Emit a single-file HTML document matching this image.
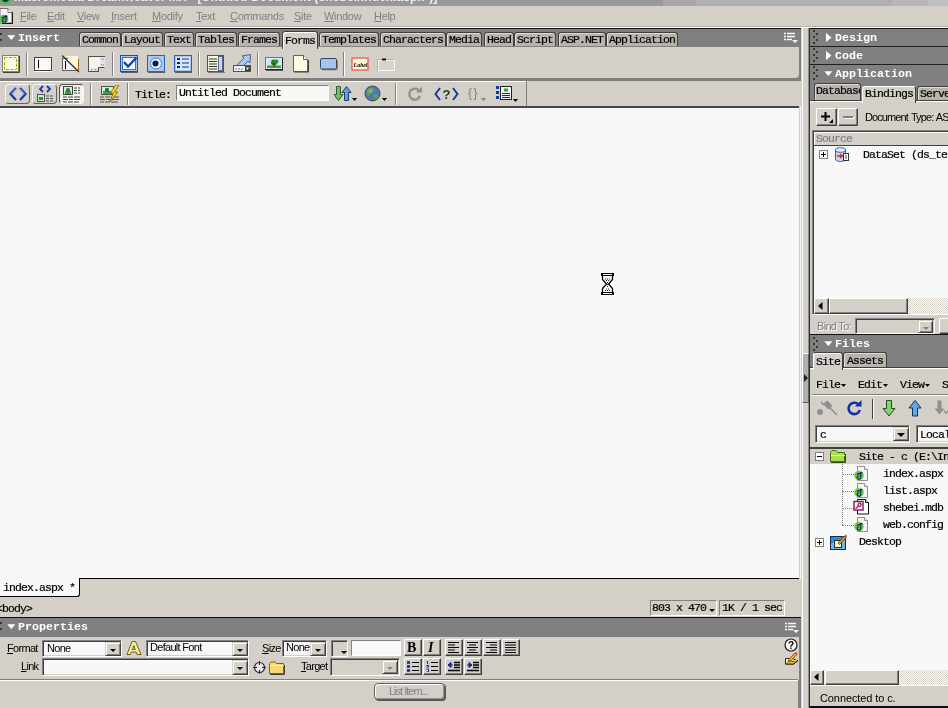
<!DOCTYPE html>
<html lang="en">
<head>
<meta charset="utf-8">
<title>Dreamweaver MX - Untitled Document</title>
<style>
html,body{margin:0;padding:0;}
html{background:#d4d0c8;}
body{width:948px;height:708px;position:relative;overflow:hidden;background:transparent;will-change:transform;font-family:"Liberation Sans",sans-serif;font-size:11px;color:#000;}
.a{position:absolute;}
.s{font-family:"Liberation Mono",monospace;font-size:11.5px;letter-spacing:-0.9px;line-height:12px;white-space:pre;-webkit-text-stroke:0.2px;}
.b{font-family:"Liberation Mono",monospace;font-weight:bold;font-size:11.7px;letter-spacing:-0.02px;line-height:12px;color:#fff;white-space:pre;}
.t{font-family:"Liberation Sans",sans-serif;font-size:11px;line-height:13px;white-space:pre;letter-spacing:-0.7px;}
.hdr{background:#808080;}
.tab{position:absolute;height:12px;top:32px;background:#b8b4ac;border:1px solid #404040;border-bottom:none;border-radius:3px 3px 0 0;padding:1px 2px 0 2px;box-shadow:inset 1px 1px 0 #e0dcd4;}
.tab.act{background:#d4d0c8;top:31px;height:14px;padding-top:3px;box-shadow:inset 1px 1px 0 #fff;border-color:#404040;}
.sep{position:absolute;width:1px;background:#808080;box-shadow:1px 0 0 #fff;}
.sunk{position:absolute;box-sizing:border-box;border:1px solid;border-color:#808080 #fff #fff #808080;box-shadow:inset 1px 1px 0 #404040, inset -1px -1px 0 #d4d0c8;background:#f8f8f8;}
.rais{position:absolute;box-sizing:border-box;border:1px solid;border-color:#fff #404040 #404040 #fff;box-shadow:inset -1px -1px 0 #808080;background:#d4d0c8;}
.dd{position:absolute;box-sizing:border-box;width:16px;border:1px solid;border-color:#d4d0c8 #404040 #404040 #d4d0c8;box-shadow:inset 1px 1px 0 #fff, inset -1px -1px 0 #808080;background:#d4d0c8;}
.dd:after{content:"";position:absolute;left:4px;top:6px;border:3px solid transparent;border-top:3px solid #000;border-bottom:none;}
.dd.dis:after{border-top-color:#808080;}
.dd.big:after{left:3px;top:5px;border-width:4px;border-top-width:4px;}
.white{background:#f8f8f8;}
.grip{position:absolute;width:5px;background-image:linear-gradient(#383838 33.4%,transparent 33.4%),linear-gradient(transparent 50%,#383838 50%,#383838 83.4%,transparent 83.4%);background-size:2px 6px,2px 6px;background-position:0 0,3px 0;background-repeat:repeat-y;}
u{text-decoration:underline;}
</style>
</head>
<body>

<!-- ===== title bar (clipped) ===== -->
<div class="a" style="left:0;top:0;width:663px;height:6px;background:#989898;overflow:hidden;">
  <div class="a t" style="left:14px;top:-9px;font-weight:bold;font-size:12px;color:#f0f0f0;letter-spacing:0;">Macromedia Dreamweaver MX - <span style="letter-spacing:0.15px;">[Untitled Document (shebei/index.aspx*)]</span></div>
</div>
<div class="a" style="left:0;top:-7px;width:11px;height:11px;background:#102868;border:2px solid #50c030;border-radius:7px;box-sizing:border-box;"></div>
<div class="a" style="left:663px;top:0;width:33px;height:6px;background:#aca4ac;"></div>
<div class="a" style="left:696px;top:0;width:196px;height:6px;background:#b0b0b0;"></div>
<div class="a" style="left:892px;top:0;width:36px;height:6px;background:#bcb4bc;"></div>
<div class="a" style="left:928px;top:0;width:20px;height:6px;background:#c0c0c0;"></div>

<!-- ===== menu bar ===== -->
<svg class="a" style="left:0;top:8px;" width="13" height="16" viewBox="0 0 13 16">
  <path d="M0 0.500h8l4 4v10.500H0z" fill="#f4f4f4" stroke="#707070"/>
  <path d="M8 0.500v4h4" fill="#fff" stroke="#707070"/>
  <path d="M12.500 4v11.500H2" fill="none" stroke="#101010"/>
  <circle cx="4" cy="11" r="4.300" fill="#58c030"/>
  <path d="M6 7v5.500a1.800 1.800 0 1 1 -1.600 -1.800M2 10c2 -1 4 -1.500 5.500 -2" stroke="#102080" stroke-width="1.100" fill="none"/>
</svg>
<div id="menubar" class="a t" style="left:0;top:10px;height:14px;width:420px;color:#808080;white-space:normal;letter-spacing:-0.3px;">
  <span class="a" style="top:0;left:20px;"><u>F</u>ile</span>
  <span class="a" style="top:0;left:47px;"><u>E</u>dit</span>
  <span class="a" style="top:0;left:77px;"><u>V</u>iew</span>
  <span class="a" style="top:0;left:111px;"><u>I</u>nsert</span>
  <span class="a" style="top:0;left:152px;"><u>M</u>odify</span>
  <span class="a" style="top:0;left:196px;"><u>T</u>ext</span>
  <span class="a" style="top:0;left:230px;"><u>C</u>ommands</span>
  <span class="a" style="top:0;left:294px;"><u>S</u>ite</span>
  <span class="a" style="top:0;left:324px;"><u>W</u>indow</span>
  <span class="a" style="top:0;left:374px;"><u>H</u>elp</span>
</div>
<div class="a" style="left:0;top:26px;width:948px;height:1px;background:#b4b0a8;"></div>
<div class="a" style="left:0;top:27px;width:948px;height:1px;background:#fff;"></div>
<div class="a" style="left:0;top:28px;width:801px;height:1px;background:#101010;"></div>
<div class="a" style="left:809px;top:28px;width:139px;height:1px;background:#101010;"></div>

<!-- ===== insert bar ===== -->
<div id="insert" class="a hdr" style="left:0;top:29px;width:801px;height:52px;"></div>
<div class="a" style="left:0;top:47px;width:799px;height:31px;background:#d4d0c8;border-radius:0 0 4px 0;"></div>
<div class="grip" style="left:-3px;top:30px;height:14px;"></div>
<svg class="a" style="left:7px;top:35px;" width="9" height="6" viewBox="0 0 9 6"><path d="M0.300 0.300h8l-4 4.700z" fill="#fff"/></svg>
<div class="a b" style="left:18px;top:32px;">Insert</div>
<svg class="a" style="left:784px;top:32px;" width="14" height="12" viewBox="0 0 14 12">
  <path d="M0 1.500h2M3 1.500h8M0 4.500h2M3 4.500h8M0 7.500h2M3 7.500h5" stroke="#fff" stroke-width="1.400"/>
  <path d="M8 8h6l-3 3z" fill="#fff"/>
</svg>
<div id="inserttabs" class="s">
  <div class="tab" style="left:79px;">Common</div>
  <div class="tab" style="left:121px;">Layout</div>
  <div class="tab" style="left:164px;">Text</div>
  <div class="tab" style="left:195px;">Tables</div>
  <div class="tab" style="left:238px;">Frames</div>
  <div class="tab act" style="left:282px;">Forms</div>
  <div class="tab" style="left:319px;">Templates</div>
  <div class="tab" style="left:380px;">Characters</div>
  <div class="tab" style="left:446px;">Media</div>
  <div class="tab" style="left:484px;">Head</div>
  <div class="tab" style="left:514px;">Script</div>
  <div class="tab" style="left:558px;">ASP.NET</div>
  <div class="tab" style="left:606px;">Application</div>
</div>

<div id="inserticons">
  <!-- separators -->
  <div class="sep" style="left:26px;top:52px;height:24px;"></div>
  <div class="sep" style="left:112px;top:52px;height:24px;"></div>
  <div class="sep" style="left:198px;top:52px;height:24px;"></div>
  <div class="sep" style="left:257px;top:52px;height:24px;"></div>
  <div class="sep" style="left:343px;top:52px;height:24px;"></div>
  <!-- form -->
  <svg class="a" style="left:2px;top:55px;" width="18" height="18" viewBox="0 0 18 18">
    <rect x="0.5" y="0.5" width="16" height="16" fill="#fafae0" stroke="#808080"/>
    <path d="M17.5 1v16.5H1" fill="none" stroke="#404040"/>
    <rect x="2.5" y="2.5" width="12" height="12" fill="none" stroke="#a8a800" stroke-dasharray="3 1.5"/>
  </svg>
  <!-- text field -->
  <svg class="a" style="left:34px;top:57px;" width="18" height="15" viewBox="0 0 18 15">
    <rect x="0.5" y="0.5" width="17" height="13" fill="#f8f8f8" stroke="#404040"/>
    <path d="M1 14.5h17" stroke="#fff"/>
    <path d="M4.500 3v8" stroke="#000"/>
  </svg>
  <!-- hidden field -->
  <svg class="a" style="left:61px;top:55px;" width="19" height="18" viewBox="0 0 19 18">
    <rect x="1.500" y="3.500" width="15" height="12" fill="#f0f0f0" stroke="#606060"/>
    <path d="M5 1h12v14z" fill="#fdfad8"/>
    <path d="M4.500 6v8" stroke="#000"/>
    <path d="M1 0.500L18 17" stroke="#303030" stroke-width="1.300"/>
    <path d="M17.500 4v12" stroke="#a06020"/>
  </svg>
  <!-- textarea -->
  <svg class="a" style="left:88px;top:55px;" width="18" height="18" viewBox="0 0 18 18">
    <rect x="0.500" y="1.500" width="16" height="15" fill="#f4f4f4" stroke="#505050"/>
    <rect x="12" y="2" width="5" height="11" fill="#e4e4e4"/>
    <rect x="2" y="13" width="8" height="3" fill="#dcdcdc"/>
    <rect x="10" y="12" width="7" height="5" fill="#d4d0c8"/>
    <path d="M10.500 17v-4.500h6" fill="none" stroke="#505050"/>
    <path d="M13 5l1.500 -1.500L16 5M13 9l1.500 1.500L16 9M3 15l1-1M7 14l1 1" stroke="#808080" fill="none" stroke-width="0.800"/>
  </svg>
  <!-- checkbox -->
  <svg class="a" style="left:120px;top:55px;" width="18" height="18" viewBox="0 0 18 18">
    <rect x="0.500" y="0.500" width="17" height="16" fill="#a8c8f0" stroke="#2050a0"/>
    <rect x="2.500" y="2.500" width="13" height="12" fill="#f0f6ff" stroke="#4070c0"/>
    <path d="M4 7l4 4.500L16.500 2.500" fill="none" stroke="#1040a0" stroke-width="2.200"/>
    <path d="M1 17.500h17" stroke="#606060"/>
  </svg>
  <!-- radio -->
  <svg class="a" style="left:147px;top:55px;" width="18" height="18" viewBox="0 0 18 18">
    <rect x="0.500" y="0.500" width="17" height="16" fill="#a8c8f0" stroke="#3060b0"/>
    <circle cx="9" cy="8.500" r="5.500" fill="#e8f0ff" stroke="#5080c0"/>
    <circle cx="8.500" cy="8.500" r="3" fill="#081850"/>
    <path d="M1 17.500h17" stroke="#606060"/>
  </svg>
  <!-- list -->
  <svg class="a" style="left:174px;top:55px;" width="18" height="18" viewBox="0 0 18 18">
    <rect x="0.500" y="0.500" width="17" height="16" fill="#a8c8f0" stroke="#3060b0"/>
    <rect x="2" y="2" width="14" height="13" fill="#d8e8ff"/>
    <path d="M3 4h3M3 8h3M3 12h3" stroke="#102080" stroke-width="2"/>
    <path d="M8 4h7M8 8h7M8 12h7" stroke="#203070" stroke-width="1"/>
    <path d="M1 17.500h17" stroke="#606060"/>
  </svg>
  <!-- list/menu -->
  <svg class="a" style="left:207px;top:55px;" width="18" height="18" viewBox="0 0 18 18">
    <rect x="0.500" y="0.500" width="16" height="16" fill="#fbfbe4" stroke="#505050"/>
    <rect x="11.500" y="1.500" width="4" height="14" fill="#c8d8f0" stroke="#606080"/>
    <path d="M2 4h8M2 6.500h8M2 9h8M2 11.500h8M2 14h8" stroke="#303030"/>
    <path d="M1 17.500h17" stroke="#808080"/>
  </svg>
  <!-- jump menu -->
  <svg class="a" style="left:233px;top:54px;" width="19" height="19" viewBox="0 0 19 19">
    <path d="M4.500 10.500L11 4 9 2l8.500 -1.500L17 9l-2 -2 -6.500 6.500z" fill="#a8c8f0" stroke="#405880" stroke-width="0.900"/>
    <rect x="0.500" y="11.500" width="17" height="6" fill="#f4f4f4" stroke="#505050"/>
    <rect x="12" y="12" width="5" height="5" fill="#404040"/>
    <path d="M13 13.500h3l-1.500 2.500z" fill="#fff"/>
    <path d="M2 15h2M5 15h2M8 15h2" stroke="#808080"/>
  </svg>
  <!-- image field -->
  <svg class="a" style="left:265px;top:57px;" width="18" height="14" viewBox="0 0 18 14">
    <rect x="0.500" y="0.500" width="17" height="12" fill="#d8ecfc" stroke="#5078b0"/>
    <path d="M0 12.500h18M17.500 1v12" stroke="#202020"/>
    <rect x="2" y="2" width="14" height="9" fill="#c8e8f8"/>
    <path d="M2 11h14v-2.500H2z" fill="#40a030"/>
    <circle cx="9" cy="5.500" r="3" fill="#208020"/>
    <circle cx="11.500" cy="4.500" r="2" fill="#309030"/>
    <path d="M9 6v4" stroke="#603010" stroke-width="1.200"/>
    <path d="M1 13.500h17" stroke="#606060"/>
  </svg>
  <!-- file field -->
  <svg class="a" style="left:293px;top:55px;" width="16" height="18" viewBox="0 0 16 18">
    <path d="M0.500 0.500h10l4 4v12h-14z" fill="#fbfbe4" stroke="#606060"/>
    <path d="M10.500 0.500v4h4" fill="#fff" stroke="#606060"/>
    <path d="M15.500 5v12H1" fill="none" stroke="#404040"/>
  </svg>
  <!-- button -->
  <svg class="a" style="left:319px;top:58px;" width="19" height="13" viewBox="0 0 19 13">
    <rect x="1.500" y="0.500" width="16" height="10.500" rx="1.500" fill="#a8c4e8" stroke="#304870"/>
    <path d="M3 11.700h14.500l0.700 -0.700V2.500" fill="none" stroke="#505050" stroke-width="0.900"/>
  </svg>
  <!-- label -->
  <svg class="a" style="left:351px;top:57px;" width="18" height="14" viewBox="0 0 18 14">
    <rect x="1" y="1" width="16" height="12" fill="#fdf6d4" stroke="#f05858" stroke-width="1.300"/>
    <text x="2.500" y="9.500" font-family="Liberation Serif,serif" font-style="italic" font-weight="bold" font-size="6" fill="#000">Label</text>
  </svg>
  <!-- fieldset -->
  <svg class="a" style="left:377px;top:57px;" width="19" height="15" viewBox="0 0 19 15">
    <rect x="1.500" y="3.500" width="16" height="10" fill="#d8d4cc" stroke="#f8f8f8"/>
    <path d="M0.500 14v-11.500h17" fill="none" stroke="#b0aca4"/>
    <rect x="5" y="1.500" width="4" height="2" fill="#101010"/>
  </svg>
</div>


<!-- ===== document toolbar ===== -->
<div id="doctb" class="a" style="left:0;top:81px;width:801px;height:25px;background:#d4d0c8;"></div>
<div class="a" style="left:0;top:106px;width:799px;height:2px;background:#484848;"></div>
<div class="a" style="left:800px;top:106px;width:1px;height:473px;background:#f4f4f4;"></div>

<div id="doctbitems">
  <div class="a" style="left:0;top:81px;width:527px;height:1px;background:#fff;"></div>
  <div class="a" style="left:526px;top:81px;width:1px;height:25px;background:#808080;"></div>
  <!-- view buttons -->
  <div class="a" style="left:5px;top:84px;width:24px;height:19px;border:1px solid;border-color:#f4f4f4 #606060 #606060 #f4f4f4;border-radius:4px;box-sizing:border-box;width:25px;height:20px;"></div>
  <div class="a" style="left:32px;top:84px;width:25px;height:20px;border:1px solid;border-color:#f4f4f4 #606060 #606060 #f4f4f4;border-radius:4px;box-sizing:border-box;"></div>
  <div class="a" style="left:59px;top:84px;width:25px;height:20px;border:1px solid;border-color:#505050 #f8f8f8 #f8f8f8 #505050;border-radius:4px;box-sizing:border-box;background:#f4f3f0;"></div>
  <svg class="a" style="left:9px;top:87px;" width="18" height="14" viewBox="0 0 18 14">
    <path d="M7 1L1.500 7 7 13M11 1l5.500 6L11 13" fill="none" stroke="#1838a8" stroke-width="2.200"/>
    <path d="M7 1.500L2.500 7M11 1.500L15.500 7" fill="none" stroke="#80a8f0" stroke-width="1"/>
  </svg>
  <svg class="a" style="left:35px;top:85px;" width="20" height="18" viewBox="0 0 20 18">
    <path d="M8 1L5 4l3 3M12 1l3 3-3 3" fill="none" stroke="#1838a8" stroke-width="1.800"/>
    <rect x="2.500" y="9.500" width="7" height="7" fill="#d0e8d0" stroke="#505050"/>
    <rect x="4" y="12" width="4" height="3" fill="#309030"/>
    <path d="M11 11h3M15 11h3M11 13.500h3M15 13.500h3M11 16h3M15 16h3" stroke="#505050"/>
  </svg>
  <svg class="a" style="left:62px;top:86px;" width="20" height="17" viewBox="0 0 20 17">
    <rect x="1.500" y="0.500" width="9" height="8" fill="#d0e8f0" stroke="#404040"/>
    <rect x="3" y="5" width="6" height="3" fill="#40a030"/>
    <circle cx="6" cy="4" r="2" fill="#208020"/>
    <path d="M12 2h3M16 2h2M12 4.500h3M16 4.500h2M12 7h3M16 7h2M1 11h4M6 11h5M12 11h6M1 13.500h5M7 13.500h4M12 13.500h6M1 16h4M6 16h5M12 16h5" stroke="#404040"/>
  </svg>
  <div class="sep" style="left:90px;top:83px;height:22px;"></div>
  <!-- live data -->
  <svg class="a" style="left:99px;top:85px;" width="22" height="19" viewBox="0 0 22 19">
    <rect x="2.500" y="1.500" width="12" height="8" fill="#d8ecf4" stroke="#505050"/>
    <rect x="4" y="6" width="9" height="3" fill="#40a030"/>
    <circle cx="8" cy="5" r="2.200" fill="#208020"/>
    <path d="M1 12h4M6 12h5M12 12h8M1 14.500h5M7 14.500h4M12 14.500h8M1 17h4M6 17h5M12 17h7" stroke="#505050"/>
    <path d="M17 0l-6 8h3.500l-4 9L19 7h-3.500l4.500 -7z" fill="#f8d820" stroke="#806000" stroke-width="0.800"/>
  </svg>
  <div class="sep" style="left:127px;top:83px;height:22px;"></div>
  <div class="a s" style="left:135px;top:89px;">Title:</div>
  <div class="sunk" style="left:176px;top:85px;width:153px;height:16px;box-shadow:none;"></div>
  <div class="a s" style="left:179px;top:87px;">Untitled Document</div>
  <!-- file management -->
  <svg class="a" style="left:334px;top:85px;" width="24" height="18" viewBox="0 0 24 18">
    <path d="M2.500 1.500h4v8h2.500l-4.500 6-4.500 -6h2.500z" fill="#70c060" stroke="#205020" stroke-width="0.900"/>
    <path d="M14.500 15.500h-4v-8h-2.500l4.500 -6 4.500 6h-2.500z" fill="#60a0e0" stroke="#103060" stroke-width="0.900"/>
    <path d="M18 13h5l-2.500 3z" fill="#000"/>
  </svg>
  <!-- preview globe -->
  <svg class="a" style="left:364px;top:85px;" width="24" height="18" viewBox="0 0 24 18">
    <circle cx="8.500" cy="8.500" r="7.500" fill="#5078b0" stroke="#404850"/>
    <path d="M4 4c2-2 5-2 6 0s-1 3-3 4-1 4-3 3-2-5 0-7zM11 9c2 0 4 1 3 3s-3 3-4 1 0-4 1-4z" fill="#60a050"/>
    <circle cx="6.500" cy="6" r="2" fill="#a0c8e0" opacity="0.500"/>
    <path d="M18 13h5l-2.500 3z" fill="#000"/>
  </svg>
  <div class="sep" style="left:395px;top:83px;height:22px;"></div>
  <!-- refresh -->
  <svg class="a" style="left:406px;top:86px;" width="18" height="16" viewBox="0 0 18 16">
    <path d="M13 4.500A5.500 5.500 0 1 0 14 10" fill="none" stroke="#909090" stroke-width="2.400"/>
    <path d="M10 6.500h6v-6z" fill="#909090"/>
  </svg>
  <!-- <?> -->
  <svg class="a" style="left:434px;top:86px;" width="25" height="16" viewBox="0 0 25 16">
    <path d="M6 2L1.500 8 6 14M19 2l4.500 6-4.500 6" fill="none" stroke="#1838a8" stroke-width="2"/>
    <text x="8.500" y="13" font-family="Liberation Sans,sans-serif" font-weight="bold" font-size="13" fill="#303030">?</text>
  </svg>
  <!-- {} -->
  <div class="a" style="left:468px;top:86px;font:12px 'Liberation Sans',sans-serif;color:#808080;letter-spacing:1.5px;">{}</div>
  <svg class="a" style="left:481px;top:98px;" width="6" height="4" viewBox="0 0 6 4"><path d="M0 0h5l-2.500 3z" fill="#808080"/></svg>
  <!-- view options -->
  <svg class="a" style="left:495px;top:85px;" width="24" height="18" viewBox="0 0 24 18">
    <rect x="5.500" y="1.500" width="11" height="13" fill="#f4f4f4" stroke="#202020"/>
    <rect x="9" y="3.500" width="4" height="3" fill="#30a030"/>
    <path d="M7 8.500h8M7 10.500h8M7 12.500h8" stroke="#303030"/>
    <rect x="1" y="1" width="3" height="3" fill="#1838a8"/>
    <rect x="1" y="6" width="3" height="3" fill="#1838a8"/>
    <rect x="1" y="11" width="3" height="3" fill="#1838a8"/>
    <path d="M18 14h5l-2.500 3z" fill="#000"/>
  </svg>
</div>


<!-- ===== document area ===== -->
<div id="doc" class="a white" style="left:0;top:108px;width:799px;height:470px;"></div>

<!-- hourglass cursor -->
<svg class="a" style="left:600px;top:272px;" width="15" height="24" viewBox="0 0 15 24">
  <rect x="0" y="0" width="15" height="24" fill="#fff"/>
  <rect x="1" y="1" width="13" height="3" fill="#000"/>
  <rect x="1" y="20" width="13" height="3" fill="#000"/>
  <rect x="3" y="2" width="9" height="1" fill="#fff"/>
  <rect x="3" y="21" width="9" height="1" fill="#fff"/>
  <path d="M2.500 4v3.500L6.500 12 2.500 16.500V20M12.500 4v3.500L8.500 12l4 4.500V20" fill="#fff" stroke="#000" stroke-width="1.300"/>
  <path d="M5 7h5M6 8.500h3M7.500 10v5M6 17h3M5 18.500h5" stroke="#000" stroke-width="0.900" stroke-dasharray="1 1"/>
</svg>


<!-- ===== status / tag selector ===== -->

<div id="status">
  <div class="a" style="left:0;top:578px;width:799px;height:1px;background:#000;"></div>
  <div class="a white" style="left:0;top:578px;width:79px;height:18px;border:1px solid #000;border-left:none;border-top:none;border-radius:0 0 3px 0;"></div>
  <div class="a s" style="left:3px;top:582px;">index.aspx *</div>
  <div class="a s" style="left:-4px;top:603px;">&lt;body&gt;</div>
  <div class="a" style="left:650px;top:600px;width:67px;height:16px;box-sizing:border-box;border:1px solid;border-color:#808080 #fff #fff #808080;"></div>
  <div class="a s" style="left:652px;top:602px;">803 x 470</div>
  <svg class="a" style="left:709px;top:609px;" width="6" height="4" viewBox="0 0 6 4"><path d="M0 0h6l-3 3z" fill="#000"/></svg>
  <div class="a" style="left:719px;top:600px;width:66px;height:16px;box-sizing:border-box;border:1px solid;border-color:#808080 #fff #fff #808080;"></div>
  <div class="a s" style="left:722px;top:602px;">1K / 1 sec</div>
</div>


<!-- ===== properties ===== -->

<div id="props">
  <div class="a" style="left:0;top:617px;width:801px;height:1px;background:#101010;"></div>
  <div class="a hdr" style="left:0;top:618px;width:801px;height:90px;"></div>
  <div class="a" style="left:0;top:637px;width:799px;height:71px;background:#d4d0c8;"></div>
  <div class="grip" style="left:-3px;top:619px;height:14px;"></div>
  <svg class="a" style="left:7px;top:624px;" width="9" height="6" viewBox="0 0 9 6"><path d="M0.300 0.300h8l-4 4.700z" fill="#fff"/></svg>
  <div class="a b" style="left:18px;top:621px;">Properties</div>
  <!-- panel menu icon -->
  <svg class="a" style="left:785px;top:622px;" width="14" height="12" viewBox="0 0 14 12">
    <path d="M0 1.500h2M3 1.500h8M0 4.500h2M3 4.500h8M0 7.500h2M3 7.500h5" stroke="#fff" stroke-width="1.400"/>
    <path d="M8 8h6l-3 3z" fill="#fff"/>
  </svg>
  <!-- row 1 -->
  <div class="a t" style="left:7px;top:642px;"><u>F</u>ormat</div>
  <div class="sunk" style="left:42px;top:640px;width:80px;height:17px;"></div>
  <div class="a t" style="left:47px;top:642px;">None</div>
  <div class="dd" style="left:105px;top:642px;height:14px;"></div>
  <svg class="a" style="left:126px;top:641px;" width="16" height="15" viewBox="0 0 16 15">
    <path d="M6 0.500h3.500L15 13.500h-4l-0.800 -2.500H5.300L4.500 13.500H1zM7.800 4.500L6.300 8.500h3z" fill="#f8f0a0" stroke="#605010" stroke-width="0.900" fill-rule="evenodd"/>
  </svg>
  <div class="sunk" style="left:146px;top:640px;width:103px;height:17px;"></div>
  <div class="a t" style="left:150px;top:641px;">Default Font</div>
  <div class="dd" style="left:232px;top:642px;height:14px;"></div>
  <div class="a t" style="left:262px;top:642px;"><u>S</u>ize</div>
  <div class="sunk" style="left:282px;top:640px;width:45px;height:17px;"></div>
  <div class="a t" style="left:286px;top:641px;">None</div>
  <div class="dd" style="left:310px;top:642px;height:14px;width:16px;"></div>
  <div class="rais" style="left:331px;top:640px;width:17px;height:17px;border-color:#808080 #fff #fff #808080;box-shadow:inset 1px 1px 0 #404040;"></div>
  <svg class="a" style="left:341px;top:651px;" width="6" height="4" viewBox="0 0 6 4"><path d="M0 0h6l-3 3z" fill="#000"/></svg>
  <div class="sunk" style="left:351px;top:640px;width:50px;height:16px;box-shadow:none;"></div>
  <!-- B I -->
  <div class="rais" style="left:404px;top:639px;width:18px;height:17px;"></div>
  <div class="a" style="left:407px;top:640px;font:bold 14px 'Liberation Serif',serif;line-height:15px;">B</div>
  <div class="rais" style="left:423px;top:639px;width:18px;height:17px;"></div>
  <div class="a" style="left:428px;top:640px;font:italic bold 14px 'Liberation Serif',serif;line-height:15px;">I</div>
  <!-- align -->
  <div class="rais" style="left:445px;top:639px;width:18px;height:17px;"></div>
  <svg class="a" style="left:448px;top:642px;" width="12" height="11" viewBox="0 0 12 11"><path d="M0 0.500h11M0 3h7M0 5.500h11M0 8h7M0 10.500h11" stroke="#000"/></svg>
  <div class="rais" style="left:464px;top:639px;width:18px;height:17px;"></div>
  <svg class="a" style="left:467px;top:642px;" width="12" height="11" viewBox="0 0 12 11"><path d="M0 0.500h11M2 3h7M0 5.500h11M2 8h7M0 10.500h11" stroke="#000"/></svg>
  <div class="rais" style="left:483px;top:639px;width:18px;height:17px;"></div>
  <svg class="a" style="left:486px;top:642px;" width="12" height="11" viewBox="0 0 12 11"><path d="M0 0.500h11M4 3h7M0 5.500h11M4 8h7M0 10.500h11" stroke="#000"/></svg>
  <div class="rais" style="left:502px;top:639px;width:18px;height:17px;"></div>
  <svg class="a" style="left:505px;top:642px;" width="12" height="11" viewBox="0 0 12 11"><path d="M0 0.500h11M0 3h11M0 5.500h11M0 8h11M0 10.500h11" stroke="#000"/></svg>
  <!-- row 2 -->
  <div class="a t" style="left:21px;top:660px;"><u>L</u>ink</div>
  <div class="sunk" style="left:42px;top:658px;width:207px;height:18px;"></div>
  <div class="dd" style="left:232px;top:660px;height:15px;"></div>
  <svg class="a" style="left:253px;top:661px;" width="14" height="14" viewBox="0 0 14 14">
    <circle cx="6.500" cy="6.500" r="5" fill="#e8e8e8" stroke="#202020" stroke-width="1.100"/>
    <path d="M6.500 0v4M6.500 9v4M0 6.500h4M9 6.500h4" stroke="#202020"/>
  </svg>
  <svg class="a" style="left:269px;top:661px;" width="17" height="14" viewBox="0 0 17 14">
    <path d="M0.500 12.500v-10l1.500 -1.500h4l1.500 1.500h7v10z" fill="#f8d870" stroke="#806010"/>
    <path d="M1 4.500h14" stroke="#fff0b0"/>
    <path d="M15.500 4v9.500H1" fill="none" stroke="#404040"/>
  </svg>
  <div class="a t" style="left:301px;top:660px;"><u>T</u>arget</div>
  <div class="sunk" style="left:330px;top:658px;width:70px;height:18px;background:#d4d0c8;"></div>
  <div class="dd dis" style="left:382px;top:660px;height:14px;"></div>
  <!-- list buttons -->
  <div class="rais" style="left:404px;top:658px;width:18px;height:17px;"></div>
  <svg class="a" style="left:407px;top:661px;" width="12" height="11" viewBox="0 0 12 11"><path d="M0 1.500h3M0 5.500h3M0 9.500h3" stroke="#1020a0" stroke-width="2.400"/><path d="M5 1.500h7M5 5.500h7M5 9.500h7" stroke="#000"/></svg>
  <div class="rais" style="left:423px;top:658px;width:18px;height:17px;"></div>
  <svg class="a" style="left:426px;top:661px;" width="12" height="11" viewBox="0 0 12 11"><path d="M1.500 0v3M0.500 4.500h2v1.500h-2M0.500 8h2v3h-2" stroke="#1020a0" fill="none"/><path d="M5 1.500h7M5 5.500h7M5 9.500h7" stroke="#000"/></svg>
  <div class="rais" style="left:445px;top:658px;width:18px;height:17px;"></div>
  <svg class="a" style="left:448px;top:661px;" width="12" height="11" viewBox="0 0 12 11"><path d="M6 1.500h6M6 4h6M6 6.500h6M0 9.500h12" stroke="#000" stroke-width="1.400"/><path d="M0 4l3 -2.500v5zM3 4h2" fill="#1020a0" stroke="#1020a0"/></svg>
  <div class="rais" style="left:464px;top:658px;width:18px;height:17px;"></div>
  <svg class="a" style="left:467px;top:661px;" width="12" height="11" viewBox="0 0 12 11"><path d="M6 1.500h6M6 4h6M6 6.500h6M0 9.500h12" stroke="#000" stroke-width="1.400"/><path d="M5 4l-3 -2.500v5zM0 4h2" fill="#1020a0" stroke="#1020a0"/></svg>
  <!-- divider -->
  <div class="a" style="left:0;top:679px;width:798px;height:1px;background:#808080;"></div>
  <div class="a" style="left:0;top:680px;width:798px;height:1px;background:#fff;"></div>
  <div class="a" style="left:798px;top:680px;width:1px;height:28px;background:#808080;"></div>
  <!-- list item button -->
  <div class="a" style="left:374px;top:683px;width:71px;height:17px;box-sizing:border-box;border:1px solid #606060;border-radius:4px;background:#d4d0c8;box-shadow:inset 1px 1px 0 #fff, inset -1px -1px 0 #909090, 1px 1px 0 #505050;"></div>
  <div class="a t" style="left:389px;top:685px;color:#808080;letter-spacing:-1px;">List Item...</div>
  <!-- help / quick tag -->
  <svg class="a" style="left:784px;top:638px;" width="15" height="15" viewBox="0 0 15 15">
    <circle cx="7" cy="7" r="6" fill="#f4f4f4" stroke="#202020" stroke-width="1.200"/>
    <text x="4" y="11" font-family="Liberation Sans,sans-serif" font-weight="bold" font-size="10" fill="#000">?</text>
  </svg>
  <svg class="a" style="left:785px;top:652px;" width="14" height="14" viewBox="0 0 14 14">
    <path d="M0.500 6.500h7l5 2.500 -4 3h-8z" fill="#fcfcd8" stroke="#202020"/>
    <path d="M0.500 9.500v2.500h8l4 -3v-1" fill="#d8c860" stroke="#202020"/>
    <path d="M3 9.500l1 -2.500 6 -6 1.800 1.800 -6 6z" fill="#f8a818" stroke="#604000" stroke-width="0.700"/>
    <path d="M10 1l1 -1 1.800 1.800 -1 1z" fill="#e03848"/>
    <path d="M3 9.500l3 -0.500 4 1" fill="none" stroke="#c02020" stroke-width="1"/>
  </svg>
</div>


<!-- ===== splitter ===== -->

<div id="split">
  <div class="a" style="left:802px;top:28px;width:1px;height:680px;background:#fff;"></div>
  <div class="a" style="left:808px;top:28px;width:1px;height:680px;background:#909090;"></div>
  <div class="a" style="left:809px;top:28px;width:1px;height:680px;background:#303030;"></div>
  <div class="a" style="left:802px;top:353px;width:7px;height:50px;box-sizing:border-box;background:#b0b0b0;border:1px solid;border-color:#fff #606060 #606060 #fff;"></div>
  <svg class="a" style="left:804px;top:374px;" width="4" height="8" viewBox="0 0 4 8"><path d="M0 0l4 4-4 4z" fill="#202020"/></svg>
</div>


<!-- ===== right panels ===== -->

<div id="right">
  <!-- collapsed headers -->
  <div class="a hdr" style="left:810px;top:29px;width:138px;height:17px;"></div>
  <div class="a" style="left:810px;top:46px;width:138px;height:1px;background:#202020;"></div>
  <div class="a hdr" style="left:810px;top:47px;width:138px;height:17px;"></div>
  <div class="a" style="left:810px;top:64px;width:138px;height:1px;background:#202020;"></div>
  <div class="a hdr" style="left:810px;top:65px;width:138px;height:35px;"></div>
  <div class="grip" style="left:813px;top:30px;height:14px;"></div>
  <div class="grip" style="left:813px;top:48px;height:14px;"></div>
  <div class="grip" style="left:813px;top:66px;height:14px;"></div>
  <svg class="a" style="left:826px;top:33px;" width="6" height="9" viewBox="0 0 6 9"><path d="M0 0l5.500 4.500L0 9z" fill="#fff"/></svg>
  <svg class="a" style="left:826px;top:51px;" width="6" height="9" viewBox="0 0 6 9"><path d="M0 0l5.500 4.500L0 9z" fill="#fff"/></svg>
  <svg class="a" style="left:824px;top:71px;" width="9" height="6" viewBox="0 0 9 6"><path d="M0.300 0.300h8l-4 4.700z" fill="#fff"/></svg>
  <div class="a b" style="left:835px;top:32px;">Design</div>
  <div class="a b" style="left:835px;top:50px;">Code</div>
  <div class="a b" style="left:835px;top:68px;">Application</div>

  <!-- application tabs -->
  <div class="a s" style="left:814px;top:83px;width:47px;height:17px;box-sizing:border-box;background:#b8b4ac;border:1px solid #404040;border-bottom:none;border-radius:3px 3px 0 0;padding:1px 0 0 1px;box-shadow:inset 1px 1px 0 #e0dcd4;overflow:hidden;">Databases</div>
  <div class="a s" style="left:917px;top:86px;width:40px;height:14px;box-sizing:border-box;background:#b8b4ac;border:1px solid #404040;border-bottom:none;border-radius:3px 3px 0 0;padding:1px 0 0 2px;box-shadow:inset 1px 1px 0 #e0dcd4;">Server Behaviors</div>
  <div class="a" style="left:810px;top:100px;width:138px;height:234px;background:#d4d0c8;"></div>
  <div class="a" style="left:810px;top:100px;width:138px;height:1px;background:#404040;"></div>
  <div class="a" style="left:810px;top:101px;width:138px;height:1px;background:#fff;"></div>
  <div class="a s" style="left:862px;top:86px;width:54px;height:17px;box-sizing:border-box;background:#d4d0c8;border:1px solid #404040;border-color:#fff #404040 #404040 #fff;border-bottom:none;border-radius:3px 3px 0 0;padding:1px 0 0 2px;">Bindings</div>

  <!-- + - -->
  <div class="rais" style="left:816px;top:108px;width:21px;height:18px;"></div>
  <svg class="a" style="left:821px;top:112px;" width="13" height="11" viewBox="0 0 13 11"><path d="M4.500 0v9M0 4.500h9" stroke="#000" stroke-width="2"/><path d="M12 7v4H8z" fill="#000"/></svg>
  <div class="rais" style="left:838px;top:108px;width:20px;height:18px;"></div>
  <div class="a" style="left:843px;top:116px;width:10px;height:2px;background:#808080;box-shadow:1px 1px 0 #fff;"></div>
  <div class="a t" style="left:865px;top:111px;letter-spacing:-0.9px;word-spacing:1px;">Document Type: ASP.NET C#</div>

  <!-- source list -->
  <div class="a" style="left:812px;top:130px;width:136px;height:185px;box-sizing:border-box;border:1px solid #808080;border-right:none;border-color:#808080 #fff #fff #808080;box-shadow:inset 1px 1px 0 #404040;background:#f8f8f8;"></div>
  <div class="a" style="left:814px;top:132px;width:134px;height:13px;background:#d4d0c8;border-bottom:1px solid #404040;box-shadow:inset 1px 1px 0 #fff;"></div>
  <div class="a s" style="left:816px;top:133px;color:#808080;">Source</div>
  <svg class="a" style="left:819px;top:150px;" width="9" height="9" viewBox="0 0 9 9"><rect x="0.500" y="0.500" width="8" height="8" fill="#fff" stroke="#808080"/><path d="M2 4.500h5M4.500 2v5" stroke="#000"/></svg>
  <svg class="a" style="left:834px;top:147px;" width="16" height="15" viewBox="0 0 16 15">
    <path d="M1.500 3v9c0 1.500 2.500 2.500 5 2.500s5 -1 5 -2.500V3" fill="#c0d8f8" stroke="#4060a0"/>
    <ellipse cx="6.500" cy="3" rx="5" ry="2.300" fill="#e0ecff" stroke="#4060a0"/>
    <rect x="9.500" y="6.500" width="5" height="7" fill="#fff" stroke="#303030"/>
    <path d="M3 9h5M6 7l2.500 2L6 11" stroke="#e02020" stroke-width="1.300" fill="none"/>
    <path d="M11 9h2M11 11h2" stroke="#404040"/>
  </svg>
  <div class="a s" style="left:863px;top:149px;">DataSet (ds_test)</div>
  <!-- h scrollbar -->
  <div class="a" style="left:814px;top:298px;width:134px;height:16px;background-color:#ece9e4;background-image:conic-gradient(#fff 25%,#d4d0c8 0 50%,#fff 0 75%,#d4d0c8 0);background-size:2px 2px;"></div>
  <div class="rais" style="left:814px;top:298px;width:15px;height:16px;"></div>
  <svg class="a" style="left:818px;top:302px;" width="5" height="8" viewBox="0 0 5 8"><path d="M4.500 0v8L0 4z" fill="#000"/></svg>
  <div class="rais" style="left:829px;top:298px;width:79px;height:16px;"></div>
  <!-- bind to -->
  <div class="a t" style="left:817px;top:320px;color:#808080;text-shadow:1px 1px 0 #fff;">Bind To:</div>
  <div class="sunk" style="left:855px;top:318px;width:80px;height:16px;background:#d4d0c8;"></div>
  <div class="dd dis" style="left:918px;top:320px;height:13px;width:15px;"></div>
  <div class="rais" style="left:939px;top:318px;width:20px;height:16px;"></div>

  <!-- files header -->
  <div class="a" style="left:810px;top:334px;width:138px;height:1px;background:#101010;"></div>
  <div class="a hdr" style="left:810px;top:335px;width:138px;height:33px;"></div>
  <div class="grip" style="left:813px;top:337px;height:14px;"></div>
  <svg class="a" style="left:824px;top:341px;" width="9" height="6" viewBox="0 0 9 6"><path d="M0.300 0.300h8l-4 4.700z" fill="#fff"/></svg>
  <div class="a b" style="left:835px;top:338px;">Files</div>
  <div class="a s" style="left:843px;top:352px;width:44px;height:15px;box-sizing:border-box;background:#b8b4ac;border:1px solid #404040;border-bottom:none;border-radius:3px 3px 0 0;padding:2px 0 0 3px;box-shadow:inset 1px 1px 0 #e0dcd4;">Assets</div>
  <div class="a" style="left:810px;top:368px;width:138px;height:340px;background:#d4d0c8;"></div>
  <div class="a" style="left:810px;top:367px;width:138px;height:1px;background:#404040;"></div>
  <div class="a" style="left:810px;top:368px;width:138px;height:1px;background:#fff;"></div>
  <div class="a s" style="left:813px;top:352px;width:30px;height:18px;box-sizing:border-box;background:#d4d0c8;border:1px solid;border-color:#404040 #404040 #404040 #fff;border-bottom:none;border-radius:3px 3px 0 0;padding:3px 0 0 2px;box-shadow:inset 0 1px 0 #fff;">Site</div>

  <!-- files menu -->
  <div class="a s" style="left:816px;top:379px;">File</div>
  <div class="a s" style="left:858px;top:379px;">Edit</div>
  <div class="a s" style="left:900px;top:379px;">View</div>
  <div class="a s" style="left:942px;top:379px;">Site</div>
  <svg class="a" style="left:841px;top:384px;" width="5" height="3" viewBox="0 0 5 3"><path d="M0 0h5l-2.500 3z" fill="#000"/></svg>
  <svg class="a" style="left:883px;top:384px;" width="5" height="3" viewBox="0 0 5 3"><path d="M0 0h5l-2.500 3z" fill="#000"/></svg>
  <svg class="a" style="left:925px;top:384px;" width="5" height="3" viewBox="0 0 5 3"><path d="M0 0h5l-2.500 3z" fill="#000"/></svg>
  <div class="a" style="left:812px;top:394px;width:136px;height:1px;background:#808080;"></div>
  <div class="a" style="left:812px;top:395px;width:136px;height:1px;background:#fff;"></div>

  <!-- files toolbar icons -->
  <svg class="a" style="left:816px;top:400px;" width="23" height="17" viewBox="0 0 23 17">
    <circle cx="4" cy="12" r="3" fill="#909090"/>
    <path d="M8 3l3.500 -2.500 5 5.500 -4 3.500 -5 -5z" fill="#909090"/>
    <path d="M5 2l3 3M14 8l7 7" stroke="#909090" stroke-width="1.600"/>
  </svg>
  <svg class="a" style="left:846px;top:400px;" width="17" height="16" viewBox="0 0 17 16">
    <path d="M12.500 4.500A5.700 5.700 0 1 0 13.800 10" fill="none" stroke="#1030a8" stroke-width="2.600"/>
    <path d="M9 6.500h6.500v-6.500z" fill="#1030a8"/>
  </svg>
  <div class="sep" style="left:872px;top:399px;height:20px;background:#404040;"></div>
  <svg class="a" style="left:882px;top:400px;" width="14" height="17" viewBox="0 0 14 17">
    <path d="M4.500 0.500h5v8h3.500l-6 7.500 -6 -7.500h3.500z" fill="#88d070" stroke="#205020"/>
  </svg>
  <svg class="a" style="left:908px;top:400px;" width="14" height="17" viewBox="0 0 14 17">
    <path d="M4.500 16h5v-8h3.500l-6 -7.500 -6 7.500h3.500z" fill="#60a8e8" stroke="#103060"/>
  </svg>
  <svg class="a" style="left:934px;top:400px;" width="14" height="17" viewBox="0 0 14 17">
    <path d="M3.500 0.500h4v8h3l-5 6 -5 -6h3z" fill="#909090"/>
    <path d="M10 11l2 2 3 -3" stroke="#909090" stroke-width="1.500" fill="none"/>
  </svg>

  <!-- site selects -->
  <div class="sunk" style="left:815px;top:425px;width:95px;height:18px;"></div>
  <div class="a s" style="left:820px;top:429px;">c</div>
  <div class="dd big" style="left:893px;top:427px;height:14px;width:16px;"></div>
  <div class="sunk" style="left:916px;top:425px;width:60px;height:18px;"></div>
  <div class="a s" style="left:920px;top:429px;">Local View</div>

  <!-- file tree -->
  <div class="a" style="left:810px;top:447px;width:138px;height:2px;background:#404040;"></div>
  <div class="a white" style="left:810px;top:449px;width:138px;height:221px;"></div>
  <div class="a" style="left:810px;top:449px;width:138px;height:15px;background:#d4d0c8;"></div>
  <svg class="a" style="left:815px;top:452px;" width="9" height="9" viewBox="0 0 9 9"><rect x="0.500" y="0.500" width="8" height="8" fill="#fff" stroke="#808080"/><path d="M2 4.500h5" stroke="#000"/></svg>
  <svg class="a" style="left:830px;top:450px;" width="17" height="13" viewBox="0 0 17 13">
    <path d="M0.500 11.500v-9l1.500 -2h4l1.500 2h7v9z" fill="#a8e050" stroke="#407010"/>
    <path d="M1 5.500h14" stroke="#d8f8a0"/>
    <path d="M15.500 4v8.500H1" fill="none" stroke="#305010"/>
  </svg>
  <div class="a s" style="left:859px;top:451px;">Site - c (E:\Inetpub\wwwroot\c)</div>
  <div class="a" style="left:842px;top:464px;width:0;height:61px;border-left:1px dotted #808080;"></div>
  <div class="a" style="left:842px;top:474px;width:12px;height:0;border-top:1px dotted #808080;"></div>
  <div class="a" style="left:842px;top:491px;width:12px;height:0;border-top:1px dotted #808080;"></div>
  <div class="a" style="left:842px;top:508px;width:12px;height:0;border-top:1px dotted #808080;"></div>
  <div class="a" style="left:842px;top:525px;width:12px;height:0;border-top:1px dotted #808080;"></div>
    <svg class="a" style="left:854px;top:466px;" width="15" height="15" viewBox="0 0 15 15"><path d="M3.500 0.500h7l3 3v11h-10z" fill="#f4f4f4" stroke="#909090"/>
      <path d="M10.500 0.500v3h3" fill="#fff" stroke="#909090"/>
      <circle cx="5" cy="9.500" r="4.500" fill="#68c038" stroke="#88d860" stroke-width="0.800"/>
      <path d="M6.800 6v5.500a1.800 1.800 0 1 1 -1.600 -1.800M3 8.500c2 -1 4 -1.500 5.500 -2" stroke="#102080" stroke-width="1.100" fill="none"/></svg>
  <svg class="a" style="left:854px;top:483px;" width="15" height="15" viewBox="0 0 15 15"><path d="M3.500 0.500h7l3 3v11h-10z" fill="#f4f4f4" stroke="#909090"/>
      <path d="M10.500 0.500v3h3" fill="#fff" stroke="#909090"/>
      <circle cx="5" cy="9.500" r="4.500" fill="#68c038" stroke="#88d860" stroke-width="0.800"/>
      <path d="M6.800 6v5.500a1.800 1.800 0 1 1 -1.600 -1.800M3 8.500c2 -1 4 -1.500 5.500 -2" stroke="#102080" stroke-width="1.100" fill="none"/></svg>
  <svg class="a" style="left:854px;top:517px;" width="15" height="15" viewBox="0 0 15 15"><path d="M3.500 0.500h7l3 3v11h-10z" fill="#f4f4f4" stroke="#909090"/>
      <path d="M10.500 0.500v3h3" fill="#fff" stroke="#909090"/>
      <circle cx="5" cy="9.500" r="4.500" fill="#68c038" stroke="#88d860" stroke-width="0.800"/>
      <path d="M6.800 6v5.500a1.800 1.800 0 1 1 -1.600 -1.800M3 8.500c2 -1 4 -1.500 5.500 -2" stroke="#102080" stroke-width="1.100" fill="none"/></svg>
  <svg class="a" style="left:853px;top:499px;" width="17" height="16" viewBox="0 0 17 16">
    <path d="M4.500 0.500h8l3 3v11.500h-11z" fill="#fff" stroke="#101010"/>
    <path d="M12.500 0.500v3h3" fill="#fff" stroke="#101010"/>
    <rect x="1" y="2.500" width="9" height="8.500" fill="#fff" stroke="#881050" stroke-width="1.400"/>
    <circle cx="6.500" cy="5.800" r="1.600" fill="none" stroke="#a01060" stroke-width="1.300"/>
    <path d="M5.500 7l-3 2.500" stroke="#a01060" stroke-width="1.400"/>
  </svg>
  <div class="a s" style="left:883px;top:468px;">index.aspx</div>
  <div class="a s" style="left:883px;top:485px;">list.aspx</div>
  <div class="a s" style="left:883px;top:502px;">shebei.mdb</div>
  <div class="a s" style="left:883px;top:519px;">web.config</div>
  <svg class="a" style="left:815px;top:538px;" width="9" height="9" viewBox="0 0 9 9"><rect x="0.500" y="0.500" width="8" height="8" fill="#fff" stroke="#808080"/><path d="M2 4.500h5M4.500 2v5" stroke="#000"/></svg>
  <svg class="a" style="left:830px;top:534px;" width="17" height="16" viewBox="0 0 17 16">
    <rect x="0.500" y="2.500" width="15" height="13" fill="#2890d8" stroke="#103050"/>
    <path d="M1 10c4 -3 9 -2 14 -4v9H1z" fill="#70b8e8"/>
    <rect x="4.500" y="6.500" width="7" height="7" fill="#fcf4c0" stroke="#303030"/>
    <path d="M8 9l6.500 -7 1.500 1.500 -6.500 7z" fill="#f0a020" stroke="#503000" stroke-width="0.700"/>
    <path d="M14.500 2l1 -1.500 1.500 1.500 -1 1.500z" fill="#e03030"/>
  </svg>
  <div class="a s" style="left:859px;top:536px;">Desktop</div>

  <!-- files h scrollbar -->
  <div class="a" style="left:810px;top:670px;width:138px;height:15px;background-color:#ece9e4;background-image:conic-gradient(#fff 25%,#d4d0c8 0 50%,#fff 0 75%,#d4d0c8 0);background-size:2px 2px;"></div>
  <div class="rais" style="left:810px;top:670px;width:14px;height:15px;"></div>
  <svg class="a" style="left:814px;top:673px;" width="5" height="8" viewBox="0 0 5 8"><path d="M4.500 0v8L0 4z" fill="#000"/></svg>
  <div class="rais" style="left:825px;top:670px;width:74px;height:15px;"></div>
  <div class="a" style="left:810px;top:685px;width:138px;height:1px;background:#fff;"></div>
  <div class="a t" style="left:820px;top:692px;letter-spacing:-0.1px;">Connected to c.</div>
  <div class="a" style="left:810px;top:706px;width:138px;height:2px;background:#101010;"></div>
</div>


</body>
</html>
